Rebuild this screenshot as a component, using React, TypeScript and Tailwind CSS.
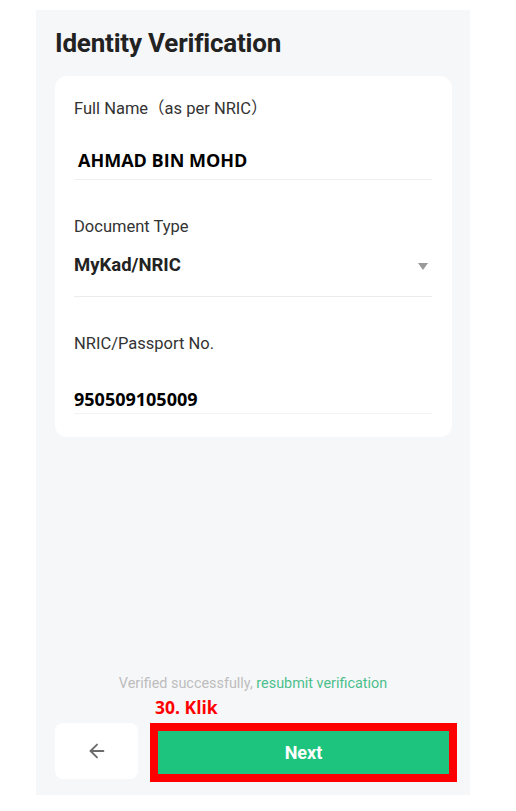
import { ArrowLeft } from "lucide-react";

const roboto = "font-['Roboto','Noto_Sans_CJK_SC',sans-serif]";
const openSans = "font-['Open_Sans','Liberation_Sans',sans-serif]";

export default function App() {
  return (
    <div className="w-[516px] h-[811px] bg-white pt-[10px] pl-[36px]">
      <div className={`w-[434px] h-[785px] bg-[#f6f7f9] flex flex-col px-[19px] ${roboto}`}>
        <h1 className="mt-[17px] text-[26px] leading-[32px] font-bold text-[#222] tracking-[-0.2px]">
          Identity Verification
        </h1>

        <div className="mt-[17px] w-[397px] bg-white rounded-xl pl-[19px] pr-[20px] pt-[23px] pb-[23px]">
          {/* full name */}
          <div className="border-b border-[#f0f0f0] pb-[7px]">
            <p className="text-[16.5px] leading-[20px] text-[#333]">Full Name（as per NRIC）</p>
            <p className={`mt-[29px] pl-[4px] text-[18px] leading-[24px] font-bold text-black ${openSans}`}>
              AHMAD BIN MOHD
            </p>
          </div>

          {/* document type */}
          <div className="mt-[37px] border-b border-[#ececec] pb-[18px]">
            <p className="text-[16.5px] leading-[20px] text-[#333]">Document Type</p>
            <div className="mt-[17px] flex items-center justify-between h-[24px]">
              <span className="text-[18.5px] font-bold text-[#222]">MyKad/NRIC</span>
              <svg width="10" height="7" viewBox="0 0 10 7" className="mr-[4px]">
                <path d="M0 0h10L5 7z" fill="#9a9a9a" />
              </svg>
            </div>
          </div>

          {/* nric */}
          <div className="mt-[37px] border-b border-[#f3f3f3] pb-[2px]">
            <p className="text-[16.5px] leading-[20px] text-[#333]">NRIC/Passport No.</p>
            <p className={`mt-[33px] text-[18px] leading-[24px] font-bold text-black ${openSans}`}>
              950509105009
            </p>
          </div>
        </div>

        <div className="flex-1" />

        <p className="text-center text-[14.4px] leading-[18px] text-[#bdbdbd]">
          Verified successfully, <span className="text-[#4cbf8c]">resubmit verification</span>
        </p>
        <p className={`mt-[3px] pl-[100px] text-[17.5px] leading-[22px] font-bold text-[#ff0000] ${openSans}`}>
          30. Klik
        </p>

        <div className="mt-[5px] mb-[13px] flex gap-[12px]">
          <button className="shrink-0 w-[83px] h-[56px] bg-white rounded-lg flex items-center justify-center">
            <ArrowLeft size={22} strokeWidth={2} color="#6b6b6b" />
          </button>
          <div className="shrink-0 w-[307px] h-[59px] border-[8px] border-[#ff0000]">
            <div className="w-full h-full bg-[#1cc47e] flex items-center justify-center text-white text-[18px] font-bold">
              Next
            </div>
          </div>
        </div>
      </div>
    </div>
  );
}
